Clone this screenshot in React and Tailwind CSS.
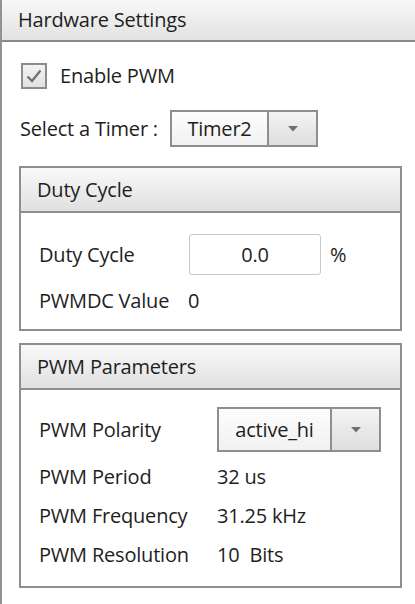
import React from "react";

function Dropdown({ value, leftW, arrowW, h }) {
  return (
    <div className={`flex border-2 border-[#8e8e8e] ${h}`}>
      <div className={`${leftW} flex items-center justify-center bg-gradient-to-b from-[#fdfdfd] to-[#f1f1f1] border-r-2 border-[#8e8e8e]`}>
        {value}
      </div>
      <div className={`${arrowW} flex items-center justify-center bg-gradient-to-b from-[#f4f4f4] to-[#dedede]`}>
        <svg width="10" height="6" viewBox="0 0 10 6">
          <path d="M0 0 L10 0 L5 5.5 Z" fill="#707070" />
        </svg>
      </div>
    </div>
  );
}

function GroupHeader({ children }) {
  return (
    <div className="h-[45px] flex items-center pl-[16px] border-b-2 border-[#8e8e8e] bg-gradient-to-b from-[#f9f9f9] to-[#e0e0e0]">
      {children}
    </div>
  );
}

export default function App() {
  return (
    <div className="w-[415px] h-[604px] bg-white border-l-2 border-[#929292] font-['Open_Sans',sans-serif] text-[20px] tracking-[-0.2px] text-[#1e1e1e] leading-none overflow-hidden">
      <div className="h-[42px] flex items-center pl-[16px] border-b-2 border-[#8a8a8a] bg-gradient-to-b from-[#f8f8f8] to-[#e2e2e2]">
        Hardware Settings
      </div>
      <div className="pl-[17px] pr-[13px]">
        <div className="mt-[19px] h-[30px] flex items-center">
          <div className="w-[26px] h-[26px] ml-[2px] border-2 border-[#8c8c8c] bg-gradient-to-b from-[#f3f3f3] to-[#e2e2e2] flex items-center justify-center">
            <svg width="18" height="16" viewBox="0 0 18 16">
              <path d="M2.5 8.5 L7 13 L15.5 2.5" fill="none" stroke="#707070" strokeWidth="2.2" />
            </svg>
          </div>
          <span className="ml-[13px]">Enable PWM</span>
        </div>
        <div className="mt-[19px] flex items-center">
          <span className="w-[151px] pl-[1px]">Select a Timer :</span>
          <Dropdown value="Timer2" leftW="w-[97px]" arrowW="w-[47px]" h="h-[37px]" />
        </div>
        <div className="mt-[19px] border-2 border-[#8e8e8e] h-[165px]">
          <GroupHeader>Duty Cycle</GroupHeader>
          <div className="pl-[18px]">
            <div className="mt-[21px] flex items-center h-[41px]">
              <span className="w-[150px]">Duty Cycle</span>
              <div className="w-[132px] h-[41px] rounded-[3px] border border-[#c9c9c9] flex items-center justify-center">0.0</div>
              <span className="ml-[9px]">%</span>
            </div>
            <div className="mt-[14px] flex items-center h-[24px]">
              <span className="w-[149px]">PWMDC Value</span>
              <span>0</span>
            </div>
          </div>
        </div>
        <div className="mt-[12px] border-2 border-[#8e8e8e] h-[245px]">
          <GroupHeader>PWM Parameters</GroupHeader>
          <div className="pl-[18px]">
            <div className="mt-[17px] flex items-center">
              <span className="w-[178px]">PWM Polarity</span>
              <Dropdown value="active_hi" leftW="w-[113px]" arrowW="w-[47px]" h="h-[45px]" />
            </div>
            <div className="mt-[5px] flex items-center h-[39px]">
              <span className="w-[178px]">PWM Period</span>
              <span>32 us</span>
            </div>
            <div className="flex items-center h-[39px]">
              <span className="w-[178px]">PWM Frequency</span>
              <span>31.25 kHz</span>
            </div>
            <div className="flex items-center h-[39px]">
              <span className="w-[178px]">PWM Resolution</span>
              <span className="whitespace-pre">10  Bits</span>
            </div>
          </div>
        </div>
      </div>
    </div>
  );
}
